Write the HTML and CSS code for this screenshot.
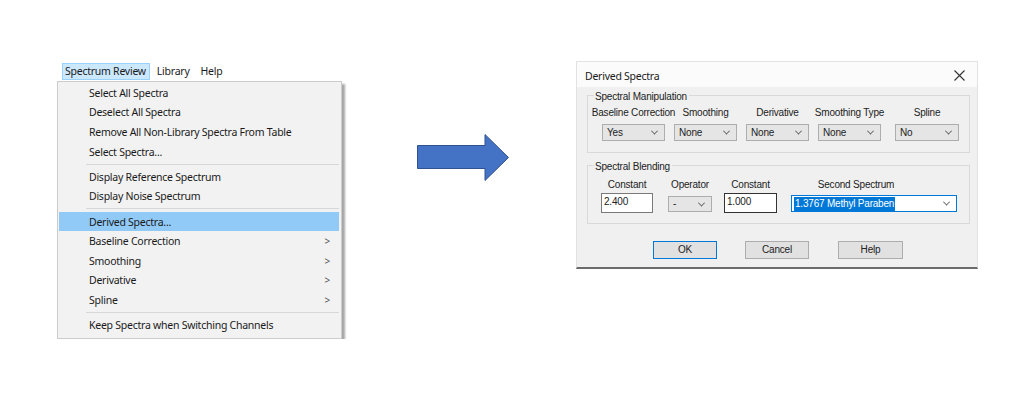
FILE: index.html
```html
<!DOCTYPE html>
<html lang="en">
<head>
    <meta charset="UTF-8">
    <title>Derived Spectra</title>
    <link rel="stylesheet" href="styles.css">
</head>
<body>
    <div class="page">
        <!-- Left: the open Spectrum Review menu -->
        <div class="menu-col">
            <div class="menubar">
                <span class="menubar-item active">Spectrum Review</span>
                <span class="menubar-item">Library</span>
                <span class="menubar-item">Help</span>
            </div>
            <div class="menu">
                <div class="menu-item">Select All Spectra</div>
                <div class="menu-item">Deselect All Spectra</div>
                <div class="menu-item">Remove All Non-Library Spectra From Table</div>
                <div class="menu-item">Select Spectra...</div>
                <div class="menu-sep"></div>
                <div class="menu-item">Display Reference Spectrum</div>
                <div class="menu-item">Display Noise Spectrum</div>
                <div class="menu-sep"></div>
                <div class="menu-item hover">Derived Spectra...</div>
                <div class="menu-item">Baseline Correction <span class="sub">&gt;</span></div>
                <div class="menu-item">Smoothing <span class="sub">&gt;</span></div>
                <div class="menu-item">Derivative <span class="sub">&gt;</span></div>
                <div class="menu-item">Spline <span class="sub">&gt;</span></div>
                <div class="menu-sep"></div>
                <div class="menu-item">Keep Spectra when Switching Channels</div>
            </div>
        </div>

        <!-- Middle: the arrow -->
        <svg class="arrow" width="93" height="48" viewBox="0 0 93 48">
            <polygon points="0.5,11.5 68,11.5 68,0.5 91.5,23.5 68,46.5 68,34.5 0.5,34.5" fill="#4472c4" stroke="#2f528f" stroke-width="1"/>
        </svg>

        <!-- Right: the Derived Spectra dialog -->
        <div class="dialog">
            <div class="titlebar">
                <span class="title">Derived Spectra</span>
                <svg class="close" width="11" height="11" viewBox="0 0 11 11">
                    <path d="M0.5 0.5 L10.5 10.5 M10.5 0.5 L0.5 10.5" stroke="#333" stroke-width="1.1" fill="none"/>
                </svg>
            </div>
            <div class="dialog-body">
                <fieldset class="group">
                    <legend>Spectral Manipulation</legend>
                    <div class="row manip">
                        <div class="field w63">
                            <div class="label">Baseline Correction</div>
                            <div class="combo">Yes<i class="chev"></i></div>
                        </div>
                        <div class="field w63">
                            <div class="label">Smoothing</div>
                            <div class="combo">None<i class="chev"></i></div>
                        </div>
                        <div class="field w63">
                            <div class="label">Derivative</div>
                            <div class="combo">None<i class="chev"></i></div>
                        </div>
                        <div class="field w63">
                            <div class="label">Smoothing Type</div>
                            <div class="combo">None<i class="chev"></i></div>
                        </div>
                        <div class="field w64 spline">
                            <div class="label">Spline</div>
                            <div class="combo">No<i class="chev"></i></div>
                        </div>
                    </div>
                </fieldset>

                <fieldset class="group blend">
                    <legend>Spectral Blending</legend>
                    <div class="row blending">
                        <div class="field w52">
                            <div class="label">Constant</div>
                            <div class="textbox">2.400</div>
                        </div>
                        <div class="field w44">
                            <div class="label">Operator</div>
                            <div class="combo small">-<i class="chev"></i></div>
                        </div>
                        <div class="field w53">
                            <div class="label">Constant</div>
                            <div class="textbox focused">1.000</div>
                        </div>
                        <div class="field w166">
                            <div class="label second">Second Spectrum</div>
                            <div class="combo active-combo"><span class="sel">1.3767 Methyl Paraben</span><i class="chev"></i></div>
                        </div>
                    </div>
                </fieldset>

                <div class="buttons">
                    <div class="btn default">OK</div>
                    <div class="btn">Cancel</div>
                    <div class="btn help">Help</div>
                </div>
            </div>
        </div>
    </div>
</body>
</html>
```

FILE: styles.css
```css
* {
    margin: 0;
    padding: 0;
    box-sizing: border-box;
}

body {
    background-color: #ffffff;
    font-family: "Noto Sans", "Open Sans", sans-serif;
    color: #000;
}

.page {
    display: flex;
    align-items: flex-start;
    padding: 61px 0 0 57px;
}

/* ---------- menu ---------- */

.menu-col {
    width: 288px;
    margin-top: 2px;
    font-size: 10.5px;
    letter-spacing: -0.25px;
    color: #1a1a1a;
}

.menubar {
    display: flex;
    height: 17px;
    align-items: center;
    padding-left: 5px;
}

.menubar-item {
    line-height: 15px;
    padding: 0 6px 0 3px;
    border: 1px solid transparent;
}

.menubar-item.active {
    background-color: #cce8ff;
    border-color: #99d1ff;
    padding: 0 3px 0 2px;
    margin-right: 3px;
}

.menu {
    width: 285px;
    margin-top: 1px;
    background-color: #f2f2f2;
    border: 1px solid #cccccc;
    box-shadow: 3px 3px 2px rgba(0, 0, 0, 0.35);
    padding: 1px 2px 3px 1px;
}

.menu-item {
    display: flex;
    align-items: center;
    height: 19.6px;
    padding-left: 30px;
    padding-right: 9px;
}

.menu-item.hover {
    background-color: #91c9f7;
}

.menu-item .sub {
    margin-left: auto;
    color: #555;
    font-size: 10px;
}

.menu-sep {
    height: 5.6px;
    margin-left: 27px;
    display: flex;
    align-items: center;
}

.menu-sep::after {
    content: "";
    flex: 1;
    height: 1px;
    background-color: #d7d7d7;
}

/* ---------- arrow ---------- */

.arrow {
    margin-left: 72px;
    margin-top: 73px;
    flex-shrink: 0;
}

/* ---------- dialog ---------- */

.dialog {
    width: 402px;
    margin-left: 66px;
    background-color: #f0f0f0;
    border: 1px solid #e2e2e2;
    border-bottom: 2px solid #6b6b6b;
    font-family: "Liberation Sans", Arial, sans-serif;
    font-size: 10px;
    letter-spacing: -0.2px;
    color: #222;
}

.titlebar {
    display: flex;
    align-items: center;
    height: 25px;
    padding: 2px 12px 0 8px;
    background-color: #fbfbfb;
}

.title {
    font-family: "Noto Sans", sans-serif;
    font-size: 10.5px;
    letter-spacing: -0.25px;
    color: #1a1a1a;
}

.close {
    margin-left: auto;
}

.dialog-body {
    padding: 0 7px 8px 10px;
}

.group {
    border: 1px solid #d9d9d9;
    padding: 0 0 11px 0;
    margin: 0;
    min-width: 0;
}

.group legend {
    margin-left: 6px;
    padding: 4px 2px 0 1px;
    line-height: 12px;
}

.group.blend {
    margin-top: 4px;
    padding-bottom: 10px;
}

.row {
    display: flex;
    align-items: flex-start;
}

.row.manip {
    padding-left: 14px;
    margin-top: 4px;
    gap: 8px;
}

.row.manip .field + .field {
    margin-left: 1px;
}

.row.manip .spline {
    margin-left: 6px !important;
}

.row.blending {
    padding-left: 13px;
    margin-top: 6px;
}

.field {
    display: flex;
    flex-direction: column;
    align-items: center;
    flex-shrink: 0;
}

.w63 { width: 63px; }
.w64 { width: 64px; }
.w52 { width: 52px; }
.w44 { width: 44px; margin-left: 15px; }
.w53 { width: 53px; margin-left: 12px; }
.w166 { width: 166px; margin-left: 14px; }

.label {
    white-space: nowrap;
    line-height: 12px;
}

.row.manip .label {
    margin-bottom: 5px;
}

.row.blending .label {
    margin-bottom: 2px;
}

.label.second {
    padding-right: 36px;
}

.combo {
    width: 100%;
    height: 17px;
    display: flex;
    align-items: center;
    padding-left: 4px;
    background-color: #e5e5e5;
    border: 1px solid #adadad;
    line-height: 12px;
}

.combo.small {
    height: 16px;
    margin-top: 3px;
}

.combo.active-combo {
    background-color: #fff;
    border-color: #0078d7;
    padding-left: 2px;
    margin-top: 2px;
}

.combo .sel {
    background-color: #0078d7;
    color: #fff;
    padding: 1px 1px;
}

.chev {
    margin-left: auto;
    margin-right: 7px;
    width: 5px;
    height: 5px;
    border-right: 1px solid #606060;
    border-bottom: 1px solid #606060;
    transform: rotate(45deg) translate(-1px, -1px);
}

.textbox {
    width: 100%;
    height: 20px;
    display: flex;
    align-items: flex-start;
    padding: 2px 0 0 2px;
    background-color: #fff;
    border: 1px solid #7a7a7a;
    line-height: 12px;
}

.textbox.focused {
    border-color: #333;
}

.buttons {
    display: flex;
    margin-top: 17px;
    padding-left: 66px;
    gap: 28px;
}

.btn {
    width: 64px;
    height: 18px;
    display: flex;
    align-items: center;
    justify-content: center;
    background-color: #e1e1e1;
    border: 1px solid #adadad;
    line-height: 12px;
}

.btn.default {
    border: 1.5px solid #0078d7;
}

.btn.help {
    width: 65px;
    margin-left: 1px;
}
```
